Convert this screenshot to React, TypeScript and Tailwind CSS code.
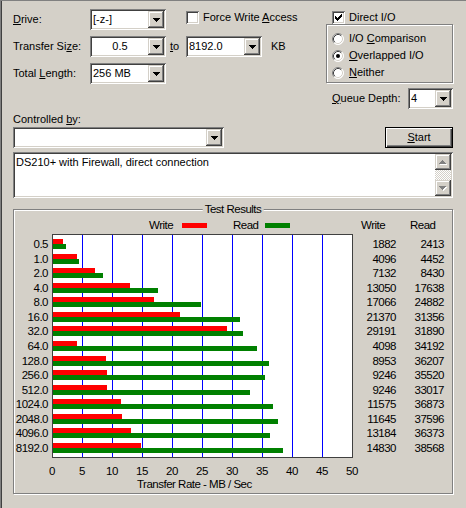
import React from "react";

const SUNKEN =
  "shadow-[inset_1px_1px_0_#808080,inset_-1px_-1px_0_#ffffff,inset_2px_2px_0_#404040,inset_-2px_-2px_0_#d4d0c8]";
const RAISED =
  "shadow-[inset_-1px_-1px_0_#404040,inset_1px_1px_0_#d4d0c8,inset_-2px_-2px_0_#808080,inset_2px_2px_0_#ffffff]";
const ETCHED = "border border-[#808080] shadow-[inset_1px_1px_0_#ffffff,1px_1px_0_#ffffff]";

const sizes = ["0.5", "1.0", "2.0", "4.0", "8.0", "16.0", "32.0", "64.0", "128.0", "256.0", "512.0", "1024.0", "2048.0", "4096.0", "8192.0"];
const writes = [1882, 4096, 7132, 13050, 17066, 21370, 29191, 4098, 8953, 9246, 9246, 11575, 11645, 13184, 14830];
const reads = [2413, 4452, 8430, 17638, 24882, 31356, 31890, 34192, 36207, 35520, 33017, 36873, 37596, 36373, 38568];

function DownArrow({ color = "#000000" }: { color?: string }) {
  return (
    <svg width="7" height="4" shapeRendering="crispEdges" className="block">
      <rect x="0" y="0" width="7" height="1" fill={color} />
      <rect x="1" y="1" width="5" height="1" fill={color} />
      <rect x="2" y="2" width="3" height="1" fill={color} />
      <rect x="3" y="3" width="1" height="1" fill={color} />
    </svg>
  );
}

function UpArrowDisabled() {
  return (
    <svg width="8" height="5" shapeRendering="crispEdges" className="block">
      <rect x="4" y="1" width="1" height="1" fill="#ffffff" />
      <rect x="3" y="2" width="3" height="1" fill="#ffffff" />
      <rect x="2" y="3" width="5" height="1" fill="#ffffff" />
      <rect x="1" y="4" width="7" height="1" fill="#ffffff" />
      <rect x="3" y="0" width="1" height="1" fill="#808080" />
      <rect x="2" y="1" width="3" height="1" fill="#808080" />
      <rect x="1" y="2" width="5" height="1" fill="#808080" />
      <rect x="0" y="3" width="7" height="1" fill="#808080" />
    </svg>
  );
}

function DownArrowDisabled() {
  return (
    <svg width="8" height="5" shapeRendering="crispEdges" className="block">
      <rect x="1" y="1" width="7" height="1" fill="#ffffff" />
      <rect x="2" y="2" width="5" height="1" fill="#ffffff" />
      <rect x="3" y="3" width="3" height="1" fill="#ffffff" />
      <rect x="4" y="4" width="1" height="1" fill="#ffffff" />
      <rect x="0" y="0" width="7" height="1" fill="#808080" />
      <rect x="1" y="1" width="5" height="1" fill="#808080" />
      <rect x="2" y="2" width="3" height="1" fill="#808080" />
      <rect x="3" y="3" width="1" height="1" fill="#808080" />
    </svg>
  );
}

function Combo({ w, text, align = "left" }: { w: string; text: string; align?: "left" | "center" }) {
  return (
    <div className={`flex h-[21px] shrink-0 bg-white p-[2px] ${w} ${SUNKEN}`}>
      <div className={`flex flex-1 items-center px-[1px] ${align === "center" ? "justify-center" : ""}`}>{text}</div>
      <div className={`flex h-[17px] w-[16px] items-center justify-center bg-[#d4d0c8] ${RAISED}`}>
        <DownArrow />
      </div>
    </div>
  );
}

function CheckBox({ checked }: { checked?: boolean }) {
  return (
    <div className={`h-[13px] w-[13px] shrink-0 bg-white ${SUNKEN}`}>
      {checked && (
        <svg width="13" height="13" shapeRendering="crispEdges" className="block">
          {[2, 3, 4, 3, 2, 1, 0].map((y, i) => (
            <rect key={i} x={3 + i} y={3 + y} width="1" height="3" fill="#000000" />
          ))}
        </svg>
      )}
    </div>
  );
}

function Radio({ checked }: { checked?: boolean }) {
  return (
    <svg width="12" height="12" className="block shrink-0">
      <circle cx="6" cy="6" r="5.5" fill="#ffffff" />
      <path d="M2.11 9.89 A5.5 5.5 0 0 1 9.89 2.11" fill="none" stroke="#808080" strokeWidth="1" />
      <path d="M9.89 2.11 A5.5 5.5 0 0 1 2.11 9.89" fill="none" stroke="#ffffff" strokeWidth="1" />
      <path d="M2.82 9.18 A4.5 4.5 0 0 1 9.18 2.82" fill="none" stroke="#404040" strokeWidth="1" />
      <path d="M9.18 2.82 A4.5 4.5 0 0 1 2.82 9.18" fill="none" stroke="#d4d0c8" strokeWidth="1" />
      {checked && <circle cx="6" cy="6" r="2" fill="#000000" />}
    </svg>
  );
}

function Chart() {
  return (
    <svg width="301" height="224" shapeRendering="crispEdges" className="block shrink-0">
      <rect x="0" y="0" width="301" height="224" fill="#ffffff" />
      {[1, 2, 3, 4, 5, 6, 7, 8, 9].map((k) => (
        <rect key={k} x={30 * k} y="1" width="1" height="222" fill="#0000ff" />
      ))}
      {sizes.map((_, i) => {
        const y = Math.round(5 + i * 14.57);
        return (
          <g key={i}>
            <rect x="1" y={y} width={Math.round(writes[i] * 0.006) - 1} height="5" fill="#ff0000" />
            <rect x="1" y={y + 5} width={Math.round(reads[i] * 0.006) - 1} height="5" fill="#008000" />
          </g>
        );
      })}
      <rect x="0" y="0" width="301" height="1" fill="#404040" />
      <rect x="0" y="223" width="301" height="1" fill="#404040" />
      <rect x="0" y="0" width="1" height="224" fill="#404040" />
      <rect x="300" y="0" width="1" height="224" fill="#404040" />
    </svg>
  );
}

export default function App() {
  return (
    <div className="relative h-[508px] w-[466px] overflow-hidden bg-[#d4d0c8] font-['Liberation_Sans',Arial,sans-serif] text-[11px] leading-[13px] text-black shadow-[inset_1px_1px_0_#808080,inset_2px_0_0_#404040]">
      {/* Top settings */}
      <div className="flex pt-[9px]">
        <div className="flex w-[326px] flex-col gap-[6px] pl-[13px]">
          <div className="flex h-[21px] items-center">
            <span className="w-[77px]">
              <u>D</u>rive:
            </span>
            <Combo w="w-[76px]" text="[-z-]" />
            <div className="ml-[20px] flex items-center self-start pt-[2px]">
              <CheckBox />
              <span className="ml-[4px]">
                Force Write <u>A</u>ccess
              </span>
            </div>
          </div>
          <div className="flex h-[21px] items-center">
            <span className="w-[77px]">
              Transfer Si<u>z</u>e:
            </span>
            <Combo w="w-[76px]" text="0.5" align="center" />
            <span className="w-[20px] pl-[4px]">
              <u>t</u>o
            </span>
            <Combo w="w-[76px]" text="8192.0" />
            <span className="ml-[9px]">KB</span>
          </div>
          <div className="flex h-[21px] items-center">
            <span className="w-[77px]">
              Total <u>L</u>ength:
            </span>
            <Combo w="w-[76px]" text="256 MB" />
          </div>
        </div>

        <div className="flex w-[127px] flex-col">
          <div className="mt-[2px] flex h-[13px] items-center pl-[6px]">
            <CheckBox checked />
            <span className="ml-[4px]">Direct I/O</span>
          </div>
          <div className={`h-[59px] pt-[5px] ${ETCHED}`}>
            <div className="flex h-[17px] items-center pl-[5px]">
              <Radio />
              <span className="ml-[5px]">
                I/O <u>C</u>omparison
              </span>
            </div>
            <div className="flex h-[17px] items-center pl-[5px]">
              <Radio checked />
              <span className="ml-[5px]">
                <u>O</u>verlapped I/O
              </span>
            </div>
            <div className="flex h-[17px] items-center pl-[5px]">
              <Radio />
              <span className="ml-[5px]">
                <u>N</u>either
              </span>
            </div>
          </div>
          <div className="mt-[5px] flex items-center pl-[6px]">
            <span className="w-[76px]">
              <u>Q</u>ueue Depth:
            </span>
            <Combo w="w-[45px]" text="4" />
          </div>
        </div>
      </div>

      {/* Controlled by */}
      <div className="mt-[4px] h-[13px] pl-[13px]">
        Controlled <u>b</u>y:
      </div>
      <div className="mt-[1px] flex pl-[13px] pr-[13px]">
        <Combo w="w-[211px]" text="" />
        <div className="ml-auto flex h-[21px] w-[68px] items-center justify-center border border-black bg-[#d4d0c8] shadow-[inset_1px_1px_0_#ffffff,inset_-1px_-1px_0_#404040,inset_-2px_-2px_0_#808080]">
          <span>
            <u>S</u>tart
          </span>
        </div>
      </div>

      {/* Description box */}
      <div className={`mx-[13px] mt-[4px] flex h-[46px] bg-white p-[2px] ${SUNKEN}`}>
        <div className="flex-1 pl-[1px] pt-[2px]">DS210+ with Firewall, direct connection</div>
        <div className="flex w-[16px] flex-col">
          <div className={`flex h-[16px] items-center justify-center bg-[#d4d0c8] ${RAISED}`}>
            <UpArrowDisabled />
          </div>
          <div className="flex-1 bg-[image:repeating-conic-gradient(#d4d0c8_0_25%,#ffffff_0_50%)] bg-[length:2px_2px]" />
          <div className={`flex h-[16px] items-center justify-center bg-[#d4d0c8] ${RAISED}`}>
            <DownArrowDisabled />
          </div>
        </div>
      </div>

      {/* Test Results */}
      <div
        className={`relative ml-[13px] mt-[11px] h-[285px] w-[440px] font-['Liberation_Sans',Arial,sans-serif] text-[11.5px] tracking-[-0.5px] ${ETCHED}`}
      >
        <div className="absolute left-1/2 top-[-8px] -translate-x-1/2 bg-[#d4d0c8] px-[2px] leading-[15px]">Test Results</div>

        <div className="mt-[7px] flex h-[16px] items-center">
          <div className="w-[135px]" />
          <span className="w-[33px]">Write</span>
          <div className="h-[5px] w-[25px] bg-[#ff0000]" />
          <div className="w-[26px]" />
          <span className="w-[32px]">Read</span>
          <div className="h-[5px] w-[25px] bg-[#008000]" />
          <div className="w-[71px]" />
          <span className="w-[49px]">Write</span>
          <span>Read</span>
        </div>

        <div className="mt-[1px] flex items-start">
          <div className="w-[38px] pr-[4px] pt-[3px] text-right">
            {sizes.map((s) => (
              <div key={s} className="h-[14.57px] leading-[14.57px]">
                {s}
              </div>
            ))}
          </div>
          <Chart />
          <div className="w-[43px] pt-[3px] text-right">
            {writes.map((v, i) => (
              <div key={i} className="h-[14.57px] leading-[14.57px]">
                {v}
              </div>
            ))}
          </div>
          <div className="w-[48px] pt-[3px] text-right">
            {reads.map((v, i) => (
              <div key={i} className="h-[14.57px] leading-[14.57px]">
                {v}
              </div>
            ))}
          </div>
        </div>

        <div className="ml-[23px] mt-[7px] flex h-[13px]">
          {[0, 5, 10, 15, 20, 25, 30, 35, 40, 45, 50].map((n) => (
            <div key={n} className="w-[30px] text-center">
              {n}
            </div>
          ))}
        </div>
        <div className="ml-[123px] h-[13px] leading-[13px]">Transfer Rate - MB / Sec</div>
      </div>
    </div>
  );
}
